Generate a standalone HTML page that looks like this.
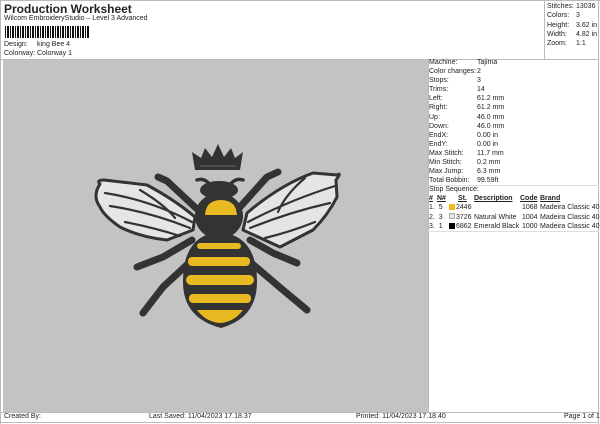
<!DOCTYPE html>
<html><head><meta charset="utf-8"><style>
*{margin:0;padding:0;box-sizing:border-box}
body{width:600px;height:424px;background:#fff;font-family:"Liberation Sans",Arial,sans-serif;color:#222;position:relative;overflow:hidden;font-size:7px}
.a{position:absolute;white-space:nowrap}
.t{font-size:12px;font-weight:bold}
.grey{position:absolute;left:3px;top:60px;width:425px;height:352px;background:#c3c3c3}
.line{position:absolute;background:#bbb}
</style></head><body>
<div class="a t" style="left:4px;top:2px">Production Worksheet</div>
<div class="a" style="left:4px;top:15px">Wilcom EmbroideryStudio – Level 3 Advanced</div>
<div class="a" style="left:5px;top:26px;width:84px;height:12px;background:repeating-linear-gradient(90deg,#111 0 1px,#fff 1px 2px,#111 2px 4px,#fff 4px 5px)"></div>
<div class="a" style="left:4px;top:41px">Design:</div><div class="a" style="left:37px;top:41px">king Bee 4</div>
<div class="a" style="left:4px;top:50px">Colorway:</div><div class="a" style="left:37px;top:50px">Colorway 1</div>
<div class="line" style="left:0;top:0;width:600px;height:1px"></div>
<div class="line" style="left:0;top:0;width:1px;height:424px"></div>
<div class="line" style="left:598px;top:0;width:1px;height:424px"></div>
<div class="line" style="left:0;top:59px;width:599px;height:1px"></div>
<div class="line" style="left:544px;top:0;width:1px;height:59px"></div>
<div class="line" style="left:428px;top:59px;width:1px;height:353px"></div>
<div class="line" style="left:0;top:412px;width:599px;height:1px"></div>
<div class="line" style="left:0;top:422px;width:599px;height:1px"></div>
<div class="grey"></div>
<div class="a" style="left:547px;top:2px;line-height:9.3px">Stitches:<br>Colors:<br>Height:<br>Width:<br>Zoom:</div>
<div class="a" style="left:576px;top:2px;line-height:9.3px">13036<br>3<br>3.62 in<br>4.82 in<br>1:1</div>
<div class="a" style="left:429px;top:58px;line-height:9.1px">Machine:<br>Color changes:<br>Stops:<br>Trims:<br>Left:<br>Right:<br>Up:<br>Down:<br>EndX:<br>EndY:<br>Max Stitch:<br>Min Stitch:<br>Max Jump:<br>Total Bobbin:<br>Stop Sequence:</div>
<div class="a" style="left:477px;top:58px;line-height:9.1px">Tajima<br>2<br>3<br>14<br>61.2 mm<br>61.2 mm<br>46.0 mm<br>46.0 mm<br>0.00 in<br>0.00 in<br>11.7 mm<br>0.2 mm<br>6.3 mm<br>99.59ft</div>
<div class="line" style="left:428px;top:185px;width:171px;height:1px;background:#ddd"></div>
<div class="a" style="left:429px;top:195px;font-weight:bold;text-decoration:underline">#</div>
<div class="a" style="left:437px;top:195px;font-weight:bold;text-decoration:underline">N#</div>
<div class="a" style="left:458px;top:195px;font-weight:bold;text-decoration:underline">St.</div>
<div class="a" style="left:474px;top:195px;font-weight:bold;text-decoration:underline">Description</div>
<div class="a" style="left:520px;top:195px;font-weight:bold;text-decoration:underline">Code</div>
<div class="a" style="left:540px;top:195px;font-weight:bold;text-decoration:underline">Brand</div>
<div class="a" style="left:429px;top:203px;line-height:9.5px">1.&nbsp; 5<br>2.&nbsp; 3<br>3.&nbsp; 1</div>
<div class="a" style="left:449px;top:204px;width:6px;height:6px;background:#f2b91b"></div>
<div class="a" style="left:449px;top:213px;width:6px;height:6px;background:#e6e6e6;border:1px solid #aaa"></div>
<div class="a" style="left:449px;top:223px;width:6px;height:6px;background:#000"></div>
<div class="a" style="left:456px;top:203px;line-height:9.5px">2446<br>3726<br>6862</div>
<div class="a" style="left:474px;top:203px;line-height:9.5px"><br>Natural White<br>Emerald Black</div>
<div class="a" style="left:522px;top:203px;line-height:9.5px">1068<br>1004<br>1000</div>
<div class="a" style="left:540px;top:203px;line-height:9.5px">Madeira Classic 40<br>Madeira Classic 40<br>Madeira Classic 40</div>
<div class="line" style="left:428px;top:231px;width:171px;height:1px;background:#ddd"></div>
<div class="a" style="left:4px;top:413px">Created By:</div>
<div class="a" style="left:149px;top:413px">Last Saved: 11/04/2023 17.18.37</div>
<div class="a" style="left:356px;top:413px">Printed: 11/04/2023 17.18.40</div>
<div class="a" style="left:564px;top:413px">Page 1 of 1</div>
<svg class="a" style="left:0;top:0" width="600" height="424" viewBox="0 0 600 424">
<g stroke="#333" stroke-linecap="round" stroke-linejoin="round" fill="none">
<path d="M100 184 Q96 180 104 180 L147 185 Q175 200 195 217 L193 230 L167 240 Q140 237 120 227 Q104 216 100 207 Q92 196 100 184 Z" fill="#e4e6e4" stroke-width="3"/>
<path d="M337 175 Q342 172 336 180 L337 197 Q328 215 313 230 L280 247 L243 230 L247 213 Q280 185 313 173 Z" fill="#e4e6e4" stroke-width="3"/>
<path d="M105 193 Q150 200 192 222 M110 206 Q150 212 190 228 M125 222 Q155 228 180 236 M140 190 Q165 205 175 218 M335 186 Q290 200 248 222 M330 203 Q290 212 250 228 M315 222 Q290 232 265 238 M305 178 Q285 195 278 212" stroke-width="2.2"/>
<path d="M198 210 L167 181 L158 177 M240 207 L267 177 L278 172 M192 240 L163 257 L137 267 M250 240 L273 253 L297 263 M190 262 L163 287 L143 313 M250 262 L283 290 L307 310" stroke-width="7"/>
<path d="M212 188 Q206 177 197 180 M228 188 Q234 177 243 180" stroke-width="3.5"/>
</g>
<path d="M195 170 L192 152 L201 158 L205 148 L212 157 L218 144 L224 157 L231 148 L235 158 L243 152 L240 170 Z" fill="#333"/>
<path d="M200 166 L236 166" stroke="#666" stroke-width="1"/>
<ellipse cx="219" cy="190" rx="19" ry="9" fill="#333"/>
<ellipse cx="219" cy="216" rx="24" ry="23" fill="#333"/>
<path d="M205 215 Q206 200 221 200 Q236 200 237 215 Z" fill="#e9b921"/>
<path d="M219 232 Q257 235 257 282 Q257 318 221 328 Q183 318 183 282 Q183 235 219 232 Z" fill="#333"/>
<g fill="#e9b921">
<rect x="197" y="243" width="44" height="6" rx="3"/>
<rect x="188" y="257" width="62" height="9" rx="4"/>
<rect x="186" y="275" width="68" height="10" rx="5"/>
<rect x="189" y="294" width="62" height="9" rx="4"/>
<path d="M197 310 L243 310 Q234 322 220 323 Q206 322 197 310 Z"/>
</g>
</svg>
</body></html>
